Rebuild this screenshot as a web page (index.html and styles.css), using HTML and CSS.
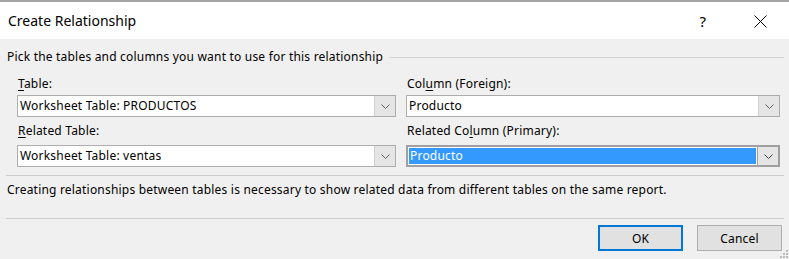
FILE: index.html
```html
<!DOCTYPE html>
<html>
<head>
<meta charset="utf-8">
<link rel="stylesheet" href="styles.css">
</head>
<body>
<div class="dialog">
  <div class="titlebar">
    <span class="title">Create Relationship</span>
    <span class="help">?</span>
    <svg class="close" width="13" height="13" viewBox="0 0 13 13"><path d="M0.5 0.5 L12.5 12.5 M12.5 0.5 L0.5 12.5" stroke="#000" stroke-width="1" fill="none"/></svg>
  </div>
  <div class="body">
    <div class="group-head">
      <span>Pick the tables and columns you want to use for this relationship</span>
      <div class="rule"></div>
    </div>
    <div class="fields">
      <div class="col">
        <label class="lbl first"><u>T</u>able:</label>
        <div class="combo">
          <div class="value">Worksheet Table: PRODUCTOS</div>
          <div class="btn"><svg width="9" height="5" viewBox="0 0 9 5"><path d="M0.5 0.5 L4.5 4.5 L8.5 0.5" stroke="#606060" fill="none"/></svg></div>
        </div>
        <label class="lbl second"><u>R</u>elated Table:</label>
        <div class="combo">
          <div class="value">Worksheet Table: ventas</div>
          <div class="btn"><svg width="9" height="5" viewBox="0 0 9 5"><path d="M0.5 0.5 L4.5 4.5 L8.5 0.5" stroke="#606060" fill="none"/></svg></div>
        </div>
      </div>
      <div class="col">
        <label class="lbl first">Col<u>u</u>mn (Foreign):</label>
        <div class="combo">
          <div class="value">Producto</div>
          <div class="btn"><svg width="9" height="5" viewBox="0 0 9 5"><path d="M0.5 0.5 L4.5 4.5 L8.5 0.5" stroke="#606060" fill="none"/></svg></div>
        </div>
        <label class="lbl second">Related Co<u>l</u>umn (Primary):</label>
        <div class="combo focused">
          <div class="value"><span class="sel">Producto</span></div>
          <div class="btn"><svg width="9" height="5" viewBox="0 0 9 5"><path d="M0.5 0.5 L4.5 4.5 L8.5 0.5" stroke="#404040" fill="none"/></svg></div>
        </div>
      </div>
    </div>
    <div class="sep first-sep"></div>
    <p class="note">Creating relationships between tables is necessary to show related data from different tables on the same report.</p>
    <div class="sep second-sep"></div>
    <div class="buttons">
      <button class="button default">OK</button>
      <button class="button">Cancel</button>
    </div>
  </div>
  <svg class="grip" width="10" height="10" viewBox="0 0 10 10">
    <rect x="7" y="1" width="2" height="2" fill="#bcbcbc"/>
    <rect x="4" y="4" width="2" height="2" fill="#bcbcbc"/>
    <rect x="7" y="4" width="2" height="2" fill="#bcbcbc"/>
    <rect x="1" y="7" width="2" height="2" fill="#bcbcbc"/>
    <rect x="4" y="7" width="2" height="2" fill="#bcbcbc"/>
    <rect x="7" y="7" width="2" height="2" fill="#bcbcbc"/>
  </svg>
</div>
</body>
</html>
```

FILE: styles.css
```css
* { box-sizing: border-box; }
html, body { margin: 0; padding: 0; }
body {
  width: 789px;
  height: 259px;
  overflow: hidden;
  background: #f0f0f0;
  font-family: "Noto Sans", "DejaVu Sans", sans-serif;
  font-size: 12px;
  line-height: 16px;
  letter-spacing: 0.2px;
  color: #000;
}
.dialog {
  position: relative;
  height: 259px;
  border-top: 2px solid #a3a3a3;
}
.titlebar {
  height: 37px;
  background: #fff;
  display: flex;
  align-items: center;
  padding-left: 8px;
  letter-spacing: 0;
}
.title {
  font-size: 14px;
  flex: 1;
  margin-top: 1px;
}
.help {
  font-size: 15px;
  margin-right: 48px;
  margin-top: 1px;
}
.close {
  margin-right: 22px;
  margin-top: 1px;
}
.body {
  padding-top: 10px;
}
.group-head {
  display: flex;
  align-items: center;
  padding-left: 7px;
  padding-right: 5px;
}
.group-head .rule {
  flex: 1;
  height: 1px;
  background: #d5d5d5;
  margin-left: 6px;
  margin-top: 1px;
}
.fields {
  display: grid;
  grid-template-columns: 379px 374px;
  column-gap: 10px;
  padding-left: 17px;
  margin-top: 11px;
}
.col {
  display: flex;
  flex-direction: column;
}
.lbl {
  display: block;
  padding-left: 1px;
}
.lbl u { text-underline-offset: 2px; }
.lbl.second { margin-top: 6px; }
.combo {
  margin-top: 3px;
  height: 22px;
  display: flex;
  border: 1px solid #adadad;
  background: #fff;
}
.lbl.second + .combo { margin-top: 6px; }
.combo .value {
  flex: 1;
  padding-left: 2px;
  display: flex;
  align-items: center;
}
.combo .btn {
  width: 21px;
  background: #e5e5e5;
  border-left: 1px solid #d0d0d0;
  display: flex;
  align-items: center;
  justify-content: center;
}
.combo.focused {
  border: 1px solid #a0a0a0;
  box-shadow: inset 0 0 0 1px #a0a0a0;
}
.combo.focused .value {
  padding: 2px 1px 2px 2px;
  align-items: stretch;
}
.combo.focused .sel {
  flex: 1;
  background: #3399ff;
  color: #fff;
  padding-left: 1px;
  display: flex;
  align-items: center;
}
.combo.focused .btn {
  background: #e5e5e5;
  border-left: 1px solid #a0a0a0;
  margin: 1px 1px 1px 0;
}
.sep {
  height: 1px;
  background: #cccccc;
  margin-left: 6px;
  margin-right: 5px;
}
.first-sep { margin-top: 8px; }
.note {
  margin: 6px 0 0 7px;
}
.second-sep { margin-top: 20px; }
.buttons {
  display: flex;
  justify-content: flex-end;
  gap: 14px;
  padding-right: 7px;
  margin-top: 6px;
}
.button {
  width: 85px;
  height: 26px;
  background: #e1e1e1;
  border: 1px solid #adadad;
  font-family: inherit;
  font-size: 12px;
  letter-spacing: 0.2px;
  color: #000;
  padding: 0;
}
.button.default {
  border: 2px solid #0078d7;
}
.grip {
  position: absolute;
  right: 0;
  bottom: 0;
}
```
